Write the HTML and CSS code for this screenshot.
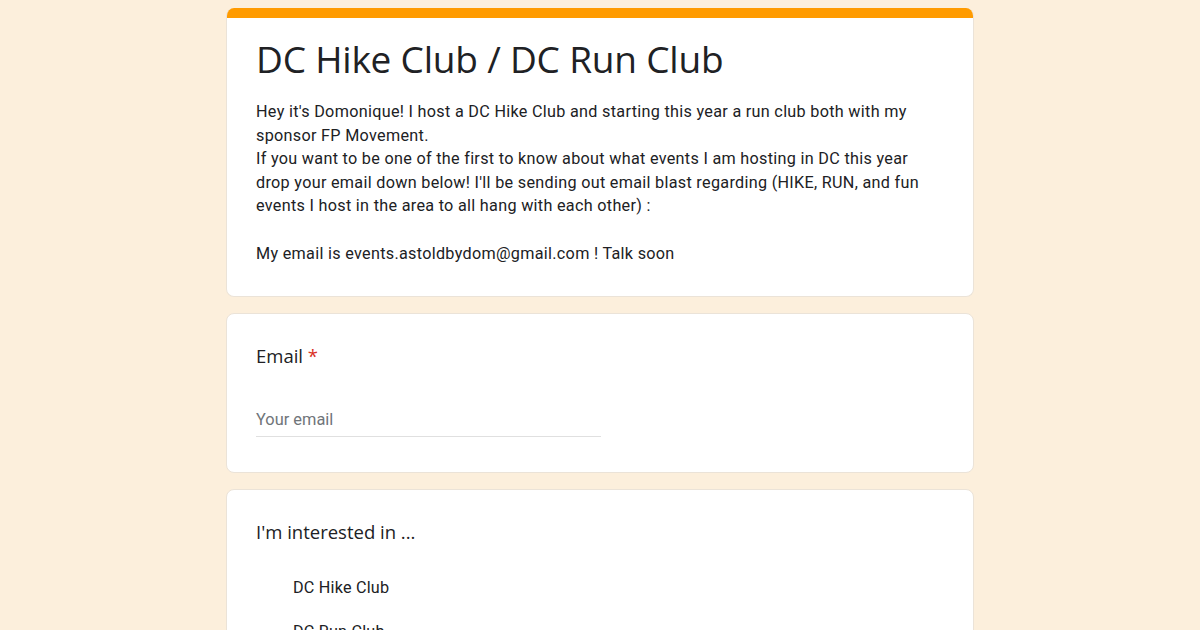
FILE: index.html
```html
<!DOCTYPE html>
<html>
<head>
<meta charset="utf-8">
<link rel="stylesheet" href="styles.css">
</head>
<body>
<main class="form">
  <section class="card header-card">
    <div class="accent"></div>
    <div class="card-body">
      <h1 class="title">DC Hike Club / DC Run Club</h1>
      <div class="desc">
        <p>Hey it's Domonique! I host a DC Hike Club and starting this year a run club both with my sponsor FP Movement.<br>If you want to be one of the first to know about what events I am hosting in DC this year drop your email down below! I'll be sending out email blast regarding (HIKE, RUN, and fun events I host in the area to all hang with each other) :</p>
        <p>My email is events.astoldbydom@gmail.com ! Talk soon</p>
      </div>
    </div>
  </section>

  <section class="card question">
    <div class="q-title">Email <span class="req">*</span></div>
    <div class="input">Your email</div>
  </section>

  <section class="card question">
    <div class="q-title">I'm interested in ...</div>
    <ul class="options">
      <li>DC Hike Club</li>
      <li>DC Run Club</li>
    </ul>
  </section>
</main>
</body>
</html>
```

FILE: styles.css
```css
html, body {
  margin: 0;
  padding: 0;
}
body {
  background: #fcefdc;
  font-family: Roboto, "Liberation Sans", sans-serif;
  color: #202124;
  height: 630px;
  overflow: hidden;
}
.form {
  width: 748px;
  margin: 8px auto 0;
  display: flex;
  flex-direction: column;
  gap: 16px;
}
.card {
  background: #fff;
  border: 1px solid #ebe3d8;
  border-radius: 8px;
  overflow: hidden;
}
.accent {
  height: 10px;
  background: #ff9b00;
}
.header-card {
  border-top: none;
}
.card-body {
  padding: 17px 29px 31px;
}
.title {
  margin: 0;
  font-family: "Open Sans", Lato, sans-serif;
  font-weight: 400;
  font-size: 37px;
  line-height: 48px;
  letter-spacing: -0.2px;
  color: #202124;
}
.desc {
  margin-top: 17px;
  max-width: 664px;
  font-size: 16.2px;
  line-height: 23.6px;
  letter-spacing: 0.3px;
  color: #202124;
}
.desc p {
  margin: 0 0 23.6px;
}
.desc p:last-child {
  margin-bottom: 0;
}
.question {
  padding: 28px 29px 35px;
}
.q-title {
  font-family: "Open Sans", Lato, sans-serif;
  font-size: 18.5px;
  line-height: 28px;
  color: #202124;
}
.req {
  color: #d93025;
}
.input {
  margin-top: 40px;
  width: 345px;
  font-size: 16.4px;
  line-height: 20px;
  color: #70757a;
  padding-bottom: 6px;
  border-bottom: 1px solid #e0e0e0;
}
.options {
  list-style: none;
  margin: 32px 0 0;
  padding: 0 0 0 37px;
}
.options li {
  font-size: 16.2px;
  line-height: 20px;
  letter-spacing: 0.2px;
  margin-bottom: 24px;
}
```
